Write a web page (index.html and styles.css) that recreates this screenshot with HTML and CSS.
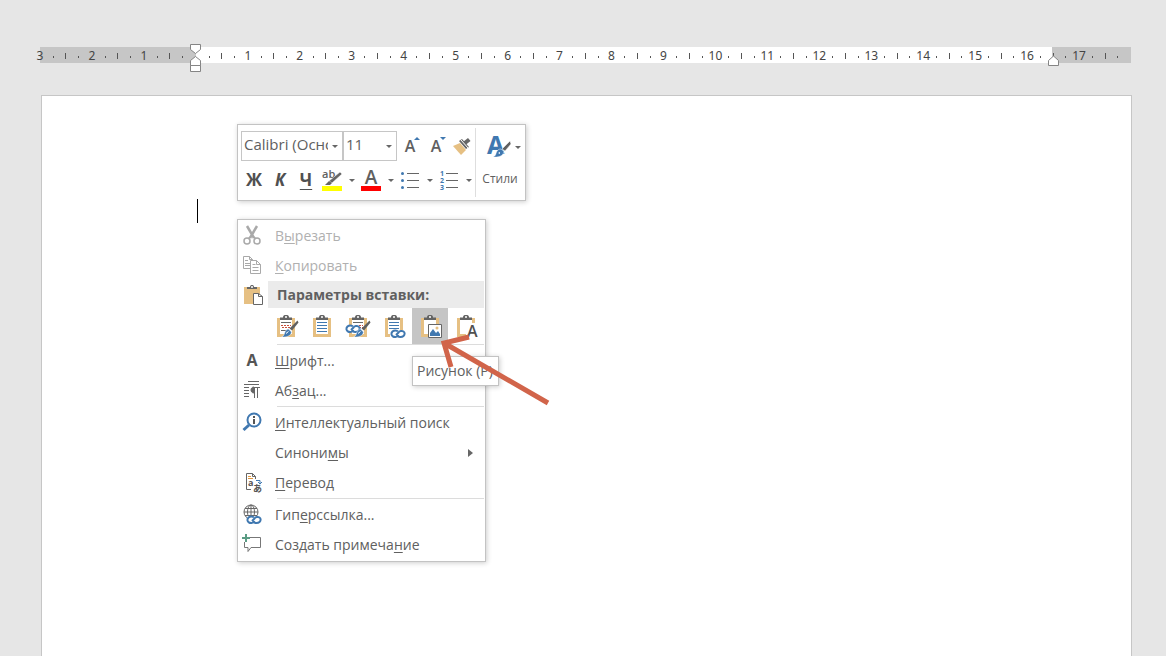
FILE: index.html
```html
<!DOCTYPE html>
<html lang="ru">
<head>
<meta charset="utf-8">
<title>Документ</title>
<link rel="stylesheet" href="styles.css">
</head>
<body>
<svg class="defs" aria-hidden="true">
  <defs>
    <g id="board">
      <path d="M3 4h18v19H3z" fill="#e6c083"/>
      <path d="M6 6h12v14H6z" fill="#fff"/>
      <path d="M6 6V3.500h3C9 1.500 10 1 12 1s3 .5 3 2.500h3V6z" fill="#636363"/>
      <circle cx="12" cy="3" r="1" fill="#fff"/>
    </g>
    <g id="brush">
      <path d="M23.500 6.500l1 2-6.500 8-2.500-2z" fill="#606060"/>
      <path d="M14.500 15l3 3c-.5 4-5 5.500-10 5 2.500-1 2.500-2.500 3.500-5 .6-1.600 2-3 3.500-3z" fill="#4078b0" stroke="#fff" stroke-width=".5"/>
      <path d="M12 19.500l2.500-2" stroke="#fff" fill="none"/>
    </g>
    <g id="chain" fill="none" stroke="#4078b0" stroke-width="2">
      <path d="M8 2.500C7 1 4 1 2.500 2.500s-1.500 4 .5 5 4.500 0 5.500-1.500"/>
      <path d="M7 6.500C8 8.500 12 8.500 13.500 7s1.500-3.500 0-4.500S9.500 2 8.500 3.500L6 6"/>
    </g>
    <path id="chev" d="M0 0h6L3 3z" fill="#666"/>
  </defs>
</svg>
<main class="workspace">
  <div class="ruler">
    <ol class="units">
      <li><span>3</span></li><li><span>2</span></li><li><span>1</span></li><li></li>
      <li><span>1</span></li><li><span>2</span></li><li><span>3</span></li><li><span>4</span></li>
      <li><span>5</span></li><li><span>6</span></li><li><span>7</span></li><li><span>8</span></li>
      <li><span>9</span></li><li><span>10</span></li><li><span>11</span></li><li><span>12</span></li>
      <li><span>13</span></li><li><span>14</span></li><li><span>15</span></li><li><span>16</span></li>
      <li><span>17</span></li>
    </ol>
    <svg class="marker marker-left" width="12" height="28" viewBox="0 0 12 28" fill="#fff" stroke="#858585">
      <path d="M.5.500h10v5l-5 4-5-4zM.5 21.500v-5l5-4 5 4v5zM.5 21.500h10v6H.5z"/>
    </svg>
    <svg class="marker marker-right" width="12" height="12" viewBox="0 0 12 12" fill="#fff" stroke="#858585">
      <path d="M.5 10.500v-5l5-4.500 5 4.500v5z"/>
    </svg>
  </div>
  <article class="sheet"><span class="caret"></span></article>

  <section class="toolbar" aria-label="Форматирование">
    <div class="tools">
      <div class="row">
        <label class="combo combo-font"><select aria-label="Шрифт"><option>Calibri (Основной текст)</option></select><svg width="6" height="3"><use href="#chev"/></svg></label>
        <label class="combo combo-size"><select aria-label="Размер"><option>11</option></select><svg width="6" height="3"><use href="#chev"/></svg></label>
        <button class="tool letter" aria-label="Увеличить размер">A<svg class="grow" width="6" height="3"><path d="M0 3h6L3 0z" fill="#4078b0"/></svg></button>
        <button class="tool letter" aria-label="Уменьшить размер">A<svg class="grow" width="6" height="3"><path d="M0 0h6L3 3z" fill="#4078b0"/></svg></button>
        <button class="tool" aria-label="Формат по образцу"><svg width="20" height="20" viewBox="0 0 20 20"><path d="M1 10l7-3 6 7-5 5z" fill="#e6c083"/><path d="M7 5l3-2 7 8-3 2z" fill="#666"/><path d="M11 6l5-4 2.500 3-5 4z" fill="#666"/><path d="M9 4l7 8" stroke="#fff"/></svg></button>
      </div>
      <div class="row">
        <button class="tool style-btn">Ж</button>
        <button class="tool style-btn italic">К</button>
        <button class="tool style-btn under">Ч</button>
        <button class="tool" aria-label="Цвет выделения"><svg width="22" height="24" viewBox="0 0 22 24"><text x="1" y="10" class="ab">ab</text><path d="M19 4l2 2-10 9-3-2z" fill="#666" stroke="#fff" stroke-width=".5"/><path d="M8 13l3 2-2 2H4z" fill="#666"/><path d="M1 18h20v5H1z" fill="#ff0"/></svg></button>
        <button class="drop" aria-label="Ещё"><svg width="6" height="3"><use href="#chev"/></svg></button>
        <button class="tool" aria-label="Цвет текста"><svg width="22" height="24" viewBox="0 0 22 24"><text x="11" y="16" class="color-a">A</text><path d="M1 18h20v5H1z" fill="#f00"/></svg></button>
        <button class="drop" aria-label="Ещё"><svg width="6" height="3"><use href="#chev"/></svg></button>
        <button class="tool" aria-label="Маркеры"><svg width="20" height="20" viewBox="0 0 20 20"><path d="M7 3.500h12M7 10.500h12M7 17.500h12" stroke="#666"/><g fill="#4078b0"><circle cx="2.500" cy="3.500" r="1.500"/><circle cx="2.500" cy="10.500" r="1.500"/><circle cx="2.500" cy="17.500" r="1.500"/></g></svg></button>
        <button class="drop" aria-label="Ещё"><svg width="6" height="3"><use href="#chev"/></svg></button>
        <button class="tool" aria-label="Нумерация"><svg width="20" height="20" viewBox="0 0 20 20"><path d="M7 3.500h12M7 10.500h12M7 17.500h12" stroke="#666"/><g class="nums"><text x="1" y="6">1</text><text x="1" y="13">2</text><text x="1" y="20">3</text></g></svg></button>
        <button class="drop" aria-label="Ещё"><svg width="6" height="3"><use href="#chev"/></svg></button>
      </div>
    </div>
    <button class="styles-btn">
      <svg width="36" height="26" viewBox="0 0 36 26"><text x="0" y="20" class="big-a">A</text><path d="M23 7l1 3-6 7-3-2z" fill="#606060" stroke="#fff" stroke-width=".5"/><path d="M14 15l3 2.500c-1 5-6 6-11 5.500 3-1.500 2.500-2.500 3.500-5 .8-2 2.500-3 4.500-3z" fill="#4078b0" stroke="#fff" stroke-width=".5"/><path d="M11 19l2-1v2z" fill="#fff"/><path d="M28 12h6l-3 3z" fill="#666"/></svg>
      <span>Стили</span>
    </button>
  </section>

  <nav class="menu" aria-label="Контекстное меню">
    <button class="item" disabled><svg width="20" height="20" viewBox="0 0 20 20" fill="none" stroke="#a9a9a9"><path d="M5 1l7 12M15 1L8 13" stroke-width="2.500"/><circle cx="5" cy="16" r="3" stroke-width="1.500"/><circle cx="15" cy="16" r="3" stroke-width="1.500"/><path d="M8 12l-2 2M12 12l2 2" stroke-width="1.500"/></svg><span>В<u>ы</u>резать</span></button>
    <button class="item" disabled><svg width="20" height="20" viewBox="0 0 20 20" fill="#fff" stroke="#a9a9a9"><path d="M1.500 1.500h6l3 3v9h-9zM7.500 1.500v3h3M3 5.500h3M3 8.500h5M3 10.500h5"/><path d="M8.500 5.500h6l4 4v9h-10zM14.500 5.500v4h4M10.500 9.500h3M10.500 12.500h6M10.500 15.500h6"/></svg><span><u>К</u>опировать</span></button>
    <div class="heading"><svg width="22" height="22" viewBox="0 0 22 22"><path d="M2 3h16v17H2z" fill="#e6c083"/><path d="M5 5V3h3c0-1.500 1-2 2-2s2 .5 2 2h3v2z" fill="#666"/><circle cx="10" cy="3" r="1" fill="#fff"/><path d="M11.500 9.500h5l4 3v8h-9z" fill="#fff" stroke="#666"/><path d="M16.500 9.500v3h4" fill="none" stroke="#666"/></svg><strong>Параметры вставки:</strong></div>
    <div class="paste-row">
      <button aria-label="Сохранить форматирование"><svg width="24" height="24"><use href="#board"/><path d="M7 8.500h10M7 16.500h5" stroke="#666"/><path d="M7 11.500h10" stroke="#c8503c" stroke-dasharray="2 1"/><path d="M8 13.500h8" stroke="#c8503c" stroke-dasharray="2 1"/><use href="#brush"/></svg></button>
      <button aria-label="Использовать стили"><svg width="24" height="24"><use href="#board"/><path d="M7 8.500h10M7 11.500h10M7 14.500h10M7 17.500h10" stroke="#4078b0"/></svg></button>
      <button aria-label="Связать и сохранить"><svg width="24" height="24"><use href="#board"/><path d="M7 8.500h10" stroke="#666"/><path d="M10 11.500h7M13 13.500h4" stroke="#c8503c" stroke-dasharray="2 1"/><path d="M0 11h13v7H0z" fill="#fff"/><use href="#chain" transform="translate(-1 10)"/><use href="#brush"/></svg></button>
      <button aria-label="Связать и использовать стили"><svg width="24" height="24"><use href="#board"/><path d="M7 8.500h10M7 11.500h10M7 14.500h10" stroke="#4078b0"/><path d="M8 16h16v8H8z" fill="#fff"/><use href="#chain" transform="translate(8 15)"/></svg></button>
      <button class="active" aria-label="Рисунок"><svg width="24" height="24"><use href="#board"/><path d="M10.500 10.500h13v13h-13z" fill="#fff" stroke="#666"/><path d="M12 22v-3l3-4 3 4 2-2 2 3v2z" fill="#4078b0"/><circle cx="19" cy="14" r="1.500" fill="#e6c083"/></svg></button>
      <button aria-label="Только текст"><svg width="24" height="24"><use href="#board"/><path d="M12 9h12v15H12z" fill="#fff"/><text x="13" y="23" class="paste-a">A</text></svg></button>
    </div>
    <hr>
    <button class="item"><svg width="20" height="20"><text x="10" y="16" class="font-a">A</text></svg><span><u>Ш</u>рифт...</span></button>
    <button class="item"><svg width="20" height="20" viewBox="0 0 20 20" stroke="#666" fill="none"><path d="M6 1.500h11M2 4.500h15M2 7.500h5M2 10.500h5M2 13.500h5M2 16.500h5M12.500 8v10M15.500 8v10M12 7.500h6"/><path d="M12 7c-4 0-4 6 0 6z" fill="#666"/></svg><span>Аб<u>з</u>ац...</span></button>
    <hr>
    <button class="item"><svg width="20" height="20" viewBox="0 0 20 20"><circle cx="12" cy="8" r="6.500" fill="#fff" stroke="#4078b0" stroke-width="2"/><path d="M7 13l-5.500 5" stroke="#4078b0" stroke-width="3"/><path d="M12 4v2M12 7v5" stroke="#555" stroke-width="2"/></svg><span><u>И</u>нтеллектуальный поиск</span></button>
    <button class="item"><i></i><span>Синони<u>м</u>ы</span><svg class="sub" width="5" height="8"><path d="M0 0l5 4-5 4z" fill="#666"/></svg></button>
    <button class="item"><svg width="20" height="20" viewBox="0 0 20 20" fill="none" stroke="#666"><path d="M9 17.500H4.500v-16h6l3 3V7M10.500 1.500v3h3"/><path d="M6 4.500h3M6 6.500h5" stroke="#e0963c"/><path d="M14 8.500h4v3M16 10l2 2 2-2" stroke="#4078b0"/><text x="6" y="14" class="tiny">a</text><text x="11" y="20" class="tiny">あ</text></svg><span><u>П</u>еревод</span></button>
    <hr>
    <button class="item"><svg width="20" height="20" viewBox="0 0 20 20"><g fill="none" stroke="#666"><circle cx="9" cy="8" r="7"/><ellipse cx="9" cy="8" rx="3.500" ry="7"/><path d="M2 8h14M3 4.500h12M3 11.500h12M9 1v14"/></g><path d="M5 12h15v8H5z" fill="#fff"/><use href="#chain" transform="translate(4 11)"/></svg><span>Гип<u>е</u>рссылка...</span></button>
    <button class="item"><svg width="20" height="20" viewBox="0 0 20 20" fill="none"><path d="M8 3.500h10.500v10H9l-3 4v-4H2.500V8" stroke="#777"/><path d="M4 0v8M0 4h8" stroke="#5a9c84" stroke-width="2"/></svg><span>Создать примеча<u>н</u>ие</span></button>
  </nav>

  <div class="tooltip" role="tooltip">Рисунок (P)</div>
  <svg class="pointer" width="112" height="78" viewBox="0 0 112 78" fill="none" stroke="#d1644a" stroke-width="5"><path d="M108 73L4 13M29 7L4 13l7 24"/></svg>
</main>
</body>
</html>
```
FILE: styles.css
```css
* { box-sizing: border-box; }
body {
  margin: 0;
  background: #e6e6e6;
  color: #606060;
  font: 14px/20px "Open Sans", "Noto Sans", sans-serif;
}
button { margin: 0; padding: 0; border: 0; background: none; color: inherit; font: inherit; }
svg { display: block; flex: none; overflow: visible; }
.defs { position: absolute; width: 0; height: 0; overflow: hidden; }
.workspace {
  position: relative;
  display: flex;
  flex-direction: column;
  min-height: 100vh;
  padding: 47px 34px 0 40px;
  overflow: hidden;
}

.ruler {
  position: relative;
  height: 16px;
  margin: 0 1px 32px 0;
  background: linear-gradient(90deg, #c6c6c6 14.28%, #fff 14.28%, #fff 92.8%, #c6c6c6 92.8%);
}
.units { display: flex; height: 16px; margin: 0; padding: 0; list-style: none; }
.units li {
  flex: 1;
  min-width: 0;
  background:
    linear-gradient(#555, #555) 25% 9px / 1px 2px no-repeat,
    linear-gradient(#555, #555) 50% 6px / 1px 6px no-repeat,
    linear-gradient(#555, #555) 75% 9px / 1px 2px no-repeat;
}
.units span {
  display: flex;
  justify-content: center;
  width: 0;
  color: #444;
  font: 12px/17px "Noto Sans", sans-serif;
}
.marker { position: absolute; }
.marker-left { left: calc(14.28% - 6px); top: -3px; }
.marker-right { left: calc(92.86% - 5px); top: 8px; }

.sheet {
  flex: 1;
  margin-left: 1px;
  border: 1px solid #c6c6c6;
  border-bottom: 0;
  background: #fff;
}
.caret { display: block; width: 1px; height: 24px; margin: 103px 0 0 155px; background: #000; }

.toolbar, .menu, .tooltip {
  position: absolute;
  border: 1px solid #c3c3c3;
  background: #fff;
  box-shadow: 1px 1px 5px rgba(0, 0, 0, .2);
}
.toolbar { left: 237px; top: 124px; display: flex; padding: 3px 1px 3px 3px; }
.tools { border-right: 1px solid #dedede; }
.row { display: flex; align-items: center; height: 34px; }
.row:first-child { height: 35px; }
.combo { position: relative; display: flex; height: 30px; border: 1px solid #c6c6c6; }
.combo select {
  width: 100%;
  padding: 0 0 4px 2px;
  border: 0;
  appearance: none;
  background: #fff;
  color: #606060;
  font: 15px/20px "Open Sans", "Noto Sans", sans-serif;
}
.combo-font { width: 102px; padding-right: 14px; }
.combo-size { width: 54px; padding-right: 14px; }
.combo svg { position: absolute; right: 4px; top: 13px; }
.tool { position: relative; display: flex; align-items: center; justify-content: center; width: 26px; height: 28px; }
.drop { display: flex; align-items: center; justify-content: center; width: 13px; height: 28px; }
.letter { font-size: 16px; font-weight: 600; }
.grow { position: absolute; right: 3px; top: 5px; }
.style-btn { font-size: 17px; font-weight: 700; color: #505050; }
.italic { font-style: italic; }
.under { text-decoration: underline; text-decoration-thickness: 1px; text-underline-offset: 3px; }
.ab { font: 600 11px "Open Sans", sans-serif; fill: #606060; }
.color-a { font: 600 19px "Open Sans", sans-serif; fill: #606060; text-anchor: middle; }
.nums { font: 700 7px "Open Sans", sans-serif; fill: #4078b0; }
.styles-btn { display: flex; flex-direction: column; align-items: center; gap: 11px; width: 48px; padding-top: 6px; font-size: 12px; line-height: 16px; }
.styles-btn svg { margin-left: 10px; }
.big-a { font: 700 25px "Open Sans", sans-serif; fill: #4078b0; }

.menu { left: 237px; top: 219px; width: 249px; padding: 1px; }
.item { display: flex; align-items: center; width: 100%; height: 30px; padding-left: 3px; text-align: left; }
.item > svg:first-child, .item > i { width: 20px; margin: 0 13px 3px 0; }
.item:disabled { color: #b0b0b0; }
.item u { text-decoration-thickness: 1px; text-underline-offset: 2px; }
.item .sub { margin: 0 11px 0 auto; }
.heading { display: flex; align-items: center; height: 27px; padding-left: 3px; }
.heading strong { flex: 1; margin-left: 4px; padding-left: 9px; background: #ebebeb; font-size: 14px; line-height: 27px; }
.paste-row { display: flex; padding-left: 29px; }
.paste-row button { display: flex; align-items: center; justify-content: center; width: 36px; height: 36px; }
.paste-row .active { background: #c5c5c5; }
.paste-a { font: 600 16px "Open Sans", sans-serif; fill: #505050; }
.font-a { font: 700 16px "Open Sans", sans-serif; fill: #555; text-anchor: middle; }
.tiny { font: 700 9px "Open Sans", "Noto Sans CJK JP", sans-serif; fill: #555; stroke: none; }
hr { height: 1px; margin: 0 0 1px 38px; border: 0; background: #dcdcdc; }

.tooltip { left: 412px; top: 356px; padding: 4px 5px 4px 4px; font-size: 14px; line-height: 20px; }
.pointer { position: absolute; left: 440px; top: 330px; }
```
